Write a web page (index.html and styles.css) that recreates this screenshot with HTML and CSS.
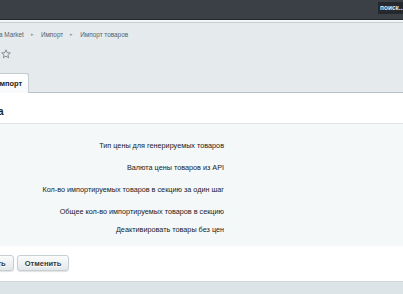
FILE: index.html
```html
<!DOCTYPE html>
<html>
<head>
<meta charset="utf-8">
<link rel="stylesheet" href="styles.css">
</head>
<body>
<div class="page">
  <header class="topbar">
    <div class="search">поиск...</div>
  </header>
  <div class="strip"></div>
  <nav class="crumbs">
    <span class="crumb">а Market</span>
    <span class="sep">▸</span>
    <span class="crumb">Импорт</span>
    <span class="sep">▸</span>
    <span class="crumb">Импорт товаров</span>
  </nav>
  <div class="fav">
    <svg width="10" height="10" viewBox="0 0 10 10"><path d="M5 0.8 L6.2 3.7 L9.3 3.9 L6.9 5.9 L7.7 8.9 L5 7.2 L2.3 8.9 L3.1 5.9 L0.7 3.9 L3.8 3.7 Z" fill="none" stroke="#6f7b82" stroke-width="0.8" stroke-linejoin="round"/></svg>
  </div>
  <div class="tabs">
    <div class="tab">Импорт</div>
  </div>
  <section class="panel">
    <div class="panel-head">ка</div>
    <div class="form">
      <div class="row"><div class="label">Тип цены для генерируемых товаров</div></div>
      <div class="row"><div class="label">Валюта цены товаров из API</div></div>
      <div class="row"><div class="label">Кол-во импортируемых товаров в секцию за один шаг</div></div>
      <div class="row"><div class="label">Общее кол-во импортируемых товаров в секцию</div></div>
      <div class="row short"><div class="label">Деактивировать товары без цен</div></div>
    </div>
    <div class="buttons">
      <button class="btn">Применить</button>
      <button class="btn">Отменить</button>
    </div>
  </section>
  <div class="footer"></div>
</div>
</body>
</html>
```
FILE: styles.css
```css
html, body {
  margin: 0;
  padding: 0;
}
body {
  font-family: "Liberation Sans", Arial, sans-serif;
  background: #dde4e7;
  width: 403px;
  height: 294px;
  overflow: hidden;
}
.page {
  width: 403px;
  height: 294px;
  overflow: hidden;
  background: #e5ebed;
}
.topbar {
  height: 19px;
  background: #3b4047;
  border-bottom: 1px solid #23272b;
  display: flex;
  align-items: flex-start;
  justify-content: flex-end;
}
.search {
  margin-top: 2px;
  width: 23px;
  height: 12px;
  background: #25292e;
  color: #e8eaec;
  font-size: 6.5px;
  font-weight: bold;
  line-height: 12px;
  padding-left: 2px;
  white-space: nowrap;
  overflow: hidden;
}
.strip {
  height: 2px;
  background: #f3f6f7;
  border-bottom: 1px solid #c5cdd1;
}
.crumbs {
  display: flex;
  align-items: center;
  height: 10px;
  margin-top: 6px;
  margin-left: -1px;
  font-size: 6.4px;
  color: #56626d;
  white-space: nowrap;
}
.sep {
  font-size: 4.5px;
  color: #8c979e;
  margin: 0 7px 0 7px;
}
.fav {
  margin-top: 10px;
  margin-left: 1px;
  height: 10px;
  display: flex;
}
.tabs {
  margin-top: 14px;
  height: 19px;
  display: flex;
}
.tab {
  margin-left: -12px;
  width: 30px;
  padding: 0 4px 0 5px;
  height: 19px;
  line-height: 19px;
  background: linear-gradient(#ffffff, #f7f9fa);
  border: 1px solid #c3ccd0;
  border-bottom: none;
  border-radius: 0 3px 0 0;
  font-size: 7.5px;
  font-weight: bold;
  color: #222;
  white-space: nowrap;
}
.panel {
  background: #ffffff;
  border-top: 1px solid #b7c1c6;
  height: 188px;
  border-bottom: 1px solid #d0d7da;
}
.panel-head {
  height: 30px;
  line-height: 37px;
  margin-left: -7px;
  font-size: 10px;
  font-weight: bold;
  color: #222;
  border-bottom: 1px solid #dfe5e8;
}
.form {
  background: #f5f8f9;
  padding: 10px 0 10px;
}
.row {
  height: 22px;
  display: flex;
  align-items: center;
}
.row.short {
  height: 14px;
}
.label {
  width: 224px;
  text-align: right;
  font-size: 7.25px;
  color: #222;
  white-space: nowrap;
}
.buttons {
  display: flex;
  gap: 3px;
  padding-top: 9px;
  margin-left: -44px;
}
.btn {
  box-sizing: border-box;
  height: 16px;
  padding: 0 7px;
  font-family: "Liberation Sans", Arial, sans-serif;
  font-size: 7.5px;
  font-weight: bold;
  color: #2f3a40;
  background: linear-gradient(#fbfcfc, #e2e8ea);
  border: 1px solid #c6ced2;
  border-radius: 3px;
  box-shadow: 0 1px 1px rgba(0,0,0,0.12);
  text-shadow: 0 1px 0 #fff;
}
.footer {
  height: 14px;
  background: #dde4e7;
}
```
